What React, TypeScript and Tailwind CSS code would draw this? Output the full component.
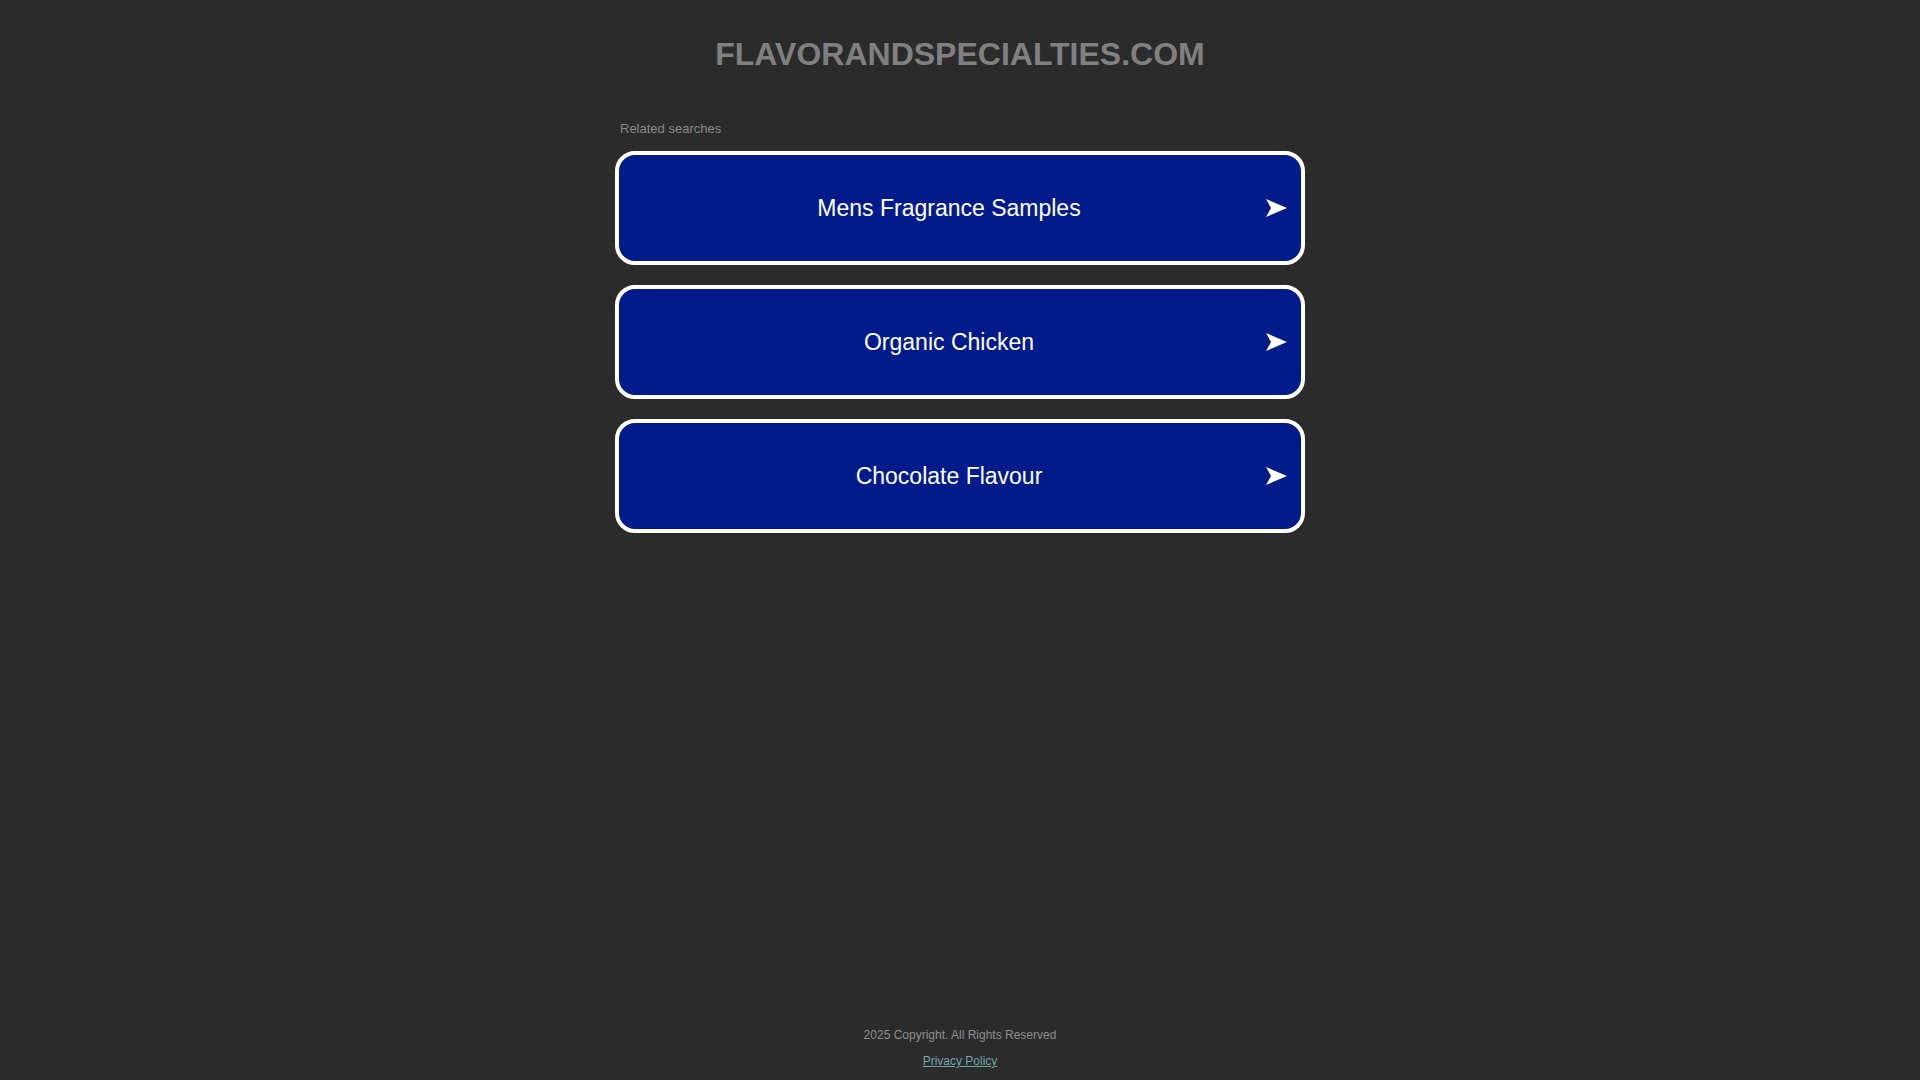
import React from 'react';

const searches = ['Mens Fragrance Samples', 'Organic Chicken', 'Chocolate Flavour'];

function Arrow() {
  return (
    <svg width="21" height="18" viewBox="0 0 21 18" className="shrink-0">
      <path d="M0 0 L21 9 L0 18 L5 9 Z" fill="#ffffff" />
    </svg>
  );
}

export default function App() {
  return (
    <div className="min-h-screen bg-[#2b2b2b] flex flex-col font-['Liberation_Sans',Arial,sans-serif]">
      <h1 className="pt-[36px] text-center text-[32px] leading-[36px] font-bold text-[#808080]">
        FLAVORANDSPECIALTIES.COM
      </h1>

      <div className="w-[690px] mx-auto mt-[49px]">
        <p className="pl-[5px] text-[13px] leading-[15px] text-[#8a8a8a]">Related searches</p>
        <div className="mt-[15px] flex flex-col gap-[20px]">
          {searches.map(s => (
            <a
              key={s}
              href="#"
              className="h-[114px] rounded-[20px] border-[4px] border-white bg-[#011b8b] flex items-center pl-[13px] pr-[14px]"
            >
              <span className="flex-1 text-center text-[23px] leading-[26px] text-white">{s}</span>
              <Arrow />
            </a>
          ))}
        </div>
      </div>

      <footer className="mt-auto pb-[12px] flex flex-col items-center gap-[12px] text-[12px] leading-[14px]">
        <p className="text-[#8e8e8e]">2025 Copyright. All Rights Reserved</p>
        <a href="#" className="text-[#71a6a8] underline">Privacy Policy</a>
      </footer>
    </div>
  );
}
